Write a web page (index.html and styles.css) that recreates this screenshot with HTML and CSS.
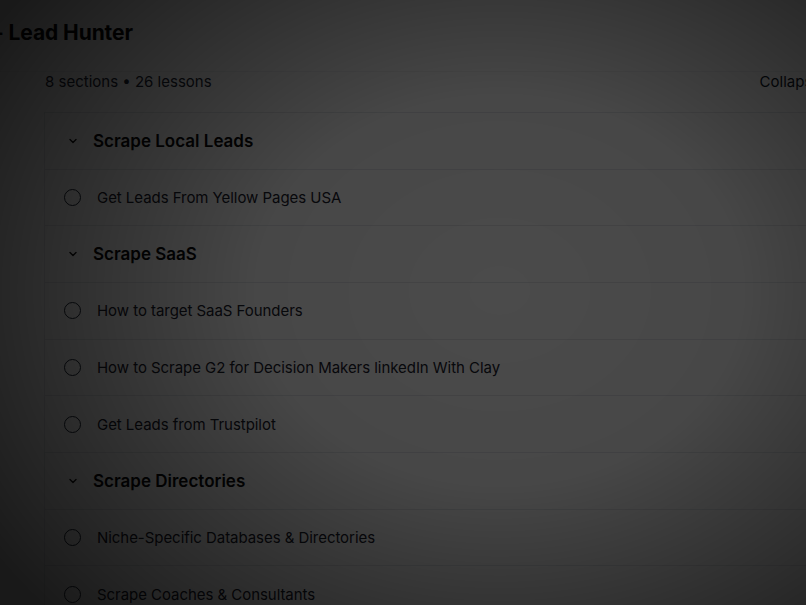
FILE: index.html
```html
<!DOCTYPE html>
<html lang="en">
<head>
<meta charset="utf-8">
<title>Lead Hunter</title>
<link rel="stylesheet" href="styles.css">
</head>
<body>
<div class="page">
  <h1 class="title">- Lead Hunter</h1>
  <div class="course">
    <div class="meta">
      <span class="count">8 sections • 26 lessons</span>
      <button class="collapse">Collapse all</button>
    </div>
    <div class="curriculum">
      <div class="section-head"><svg class="chev" viewBox="0 0 12 12"><path d="M3 4.5l3 3 3-3"/></svg><span>Scrape Local Leads</span></div>
      <div class="lesson"><span class="dot"></span><span>Get Leads From Yellow Pages USA</span></div>
      <div class="section-head"><svg class="chev" viewBox="0 0 12 12"><path d="M3 4.5l3 3 3-3"/></svg><span>Scrape SaaS</span></div>
      <div class="lesson"><span class="dot"></span><span>How to target SaaS Founders</span></div>
      <div class="lesson"><span class="dot"></span><span>How to Scrape G2 for Decision Makers linkedIn With Clay</span></div>
      <div class="lesson"><span class="dot"></span><span>Get Leads from Trustpilot</span></div>
      <div class="section-head"><svg class="chev" viewBox="0 0 12 12"><path d="M3 4.5l3 3 3-3"/></svg><span>Scrape Directories</span></div>
      <div class="lesson"><span class="dot"></span><span>Niche-Specific Databases &amp; Directories</span></div>
      <div class="lesson"><span class="dot"></span><span>Scrape Coaches &amp; Consultants</span></div>
    </div>
  </div>
</div>
<div class="backdrop"></div>
</body>
</html>
```
FILE: styles.css
```css
html, body {
  margin: 0;
  padding: 0;
  background: #ffffff;
  overflow: hidden;
  width: 806px;
  height: 605px;
}
body {
  font-family: Inter, "Noto Sans", sans-serif;
  color: #111827;
}
.page {
  width: 900px;
}
.title {
  margin: 0;
  padding: 20px 0 0 0;
  margin-left: -6px;
  height: 71px;
  box-sizing: border-box;
  font-size: 21px;
  font-weight: 700;
  line-height: 26px;
  letter-spacing: -0.1px;
  color: #0b0b0c;
}
.course {
  border-top: 1px solid #f1f2f4;
  padding-left: 44px;
}
.meta {
  height: 40px;
  display: flex;
  align-items: flex-start;
  justify-content: space-between;
  border-bottom: 1px solid #e5e7eb;
  padding-left: 1px;
  line-height: 20px;
}
.count {
  font-size: 15px;
  color: #1f2937;
}
.collapse {
  margin-right: 59px;
  background: none;
  border: 0;
  padding: 0;
  font-family: inherit;
  font-size: 15px;
  line-height: 20px;
  color: #111827;
}
.curriculum {
  border-left: 1px solid #e5e7eb;
}
.section-head, .lesson {
  height: 55.67px;
  border-bottom: 1px solid #e5e7eb;
  display: flex;
  align-items: center;
}
.section-head {
  padding-left: 22px;
  gap: 14px;
  font-size: 17px;
  font-weight: 600;
  color: #0b0b0c;
}
.chev {
  width: 12px;
  height: 12px;
  fill: none;
  stroke: #111;
  stroke-width: 1.4;
  stroke-linecap: round;
  stroke-linejoin: round;
}
.lesson {
  padding-left: 19px;
  gap: 16px;
  font-size: 15px;
  color: #1a202c;
  letter-spacing: -0.05px;
}
.dot {
  border: 1.5px solid #1f2937;
  border-radius: 50%;
  flex: none;
  box-sizing: border-box;
  width: 17px;
  height: 17px;
}
.backdrop {
  position: fixed;
  inset: 0;
  background: radial-gradient(ellipse 75% 80% at 62% 48%, rgba(0,0,0,0.705) 0%, rgba(0,0,0,0.72) 40%, rgba(0,0,0,0.9) 100%);
}
```
